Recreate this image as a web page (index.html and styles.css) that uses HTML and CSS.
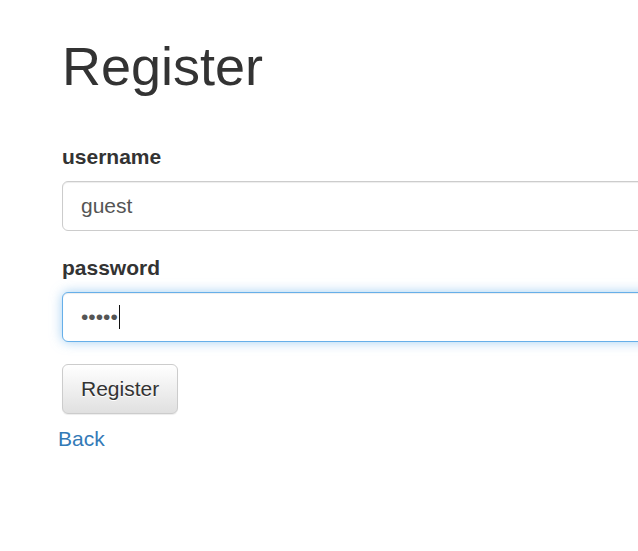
FILE: index.html
```html
<!DOCTYPE html>
<html lang="en">
<head>
<meta charset="utf-8">
<title>Register</title>
<link rel="stylesheet" href="styles.css">
</head>
<body>
<div class="container">
  <h1 class="title">Register</h1>
  <form class="form">
    <div class="form-group">
      <label class="label" for="username">username</label>
      <input class="form-control" id="username" type="text" value="guest">
    </div>
    <div class="form-group">
      <label class="label">password</label>
      <div class="form-control focused"><span class="dots">•••••</span><span class="caret"></span></div>
    </div>
    <button type="button" class="btn">Register</button>
  </form>
  <a class="back" href="#">Back</a>
</div>
</body>
</html>
```

FILE: styles.css
```css
html, body {
  margin: 0;
  padding: 0;
  overflow: hidden;
  background: #fff;
}
body {
  font-family: "Liberation Sans", Arial, Helvetica, sans-serif;
  color: #333;
}
.container {
  padding: 37px 0 0 62px;
}
.title {
  margin: 0 0 46px 0;
  font-size: 54px;
  line-height: 59px;
  font-weight: 500;
  color: #333;
}
.form {
  width: 720px;
  margin: 0;
}
.form-group {
  margin-bottom: 22px;
}
.label {
  display: block;
  font-size: 21px;
  line-height: 30px;
  font-weight: bold;
  color: #333;
  margin-bottom: 9px;
}
.form-control {
  display: flex;
  align-items: center;
  box-sizing: border-box;
  width: 100%;
  height: 50px;
  padding: 0 18px;
  font-family: inherit;
  font-size: 21px;
  line-height: 30px;
  color: #555;
  background: #fff;
  border: 1px solid #ccc;
  border-radius: 6px;
  box-shadow: inset 0 1px 1px rgba(0, 0, 0, 0.075);
  outline: none;
}
.form-control.focused {
  border-color: #66afe9;
  box-shadow: inset 0 1px 1px rgba(0, 0, 0, 0.075), 0 0 12px rgba(102, 175, 233, 0.6);
}
.dots {
  color: #555;
  letter-spacing: 0;
}
.caret {
  display: inline-block;
  width: 0;
  height: 24px;
  border-left: 1px solid #111;
  margin-left: 1px;
}
.btn {
  display: block;
  box-sizing: border-box;
  height: 50px;
  padding: 0 18px;
  font-family: inherit;
  font-size: 21px;
  color: #333;
  background: linear-gradient(to bottom, #fff 0%, #e0e0e0 100%);
  border: 1px solid #ccc;
  border-radius: 6px;
  text-shadow: 0 1px 0 #fff;
  box-shadow: inset 0 1px 0 rgba(255, 255, 255, 0.15), 0 1px 1px rgba(0, 0, 0, 0.075);
  cursor: pointer;
}
.back {
  display: inline-block;
  margin: 10px 0 0 -4px;
  font-size: 21px;
  line-height: 30px;
  color: #337ab7;
  text-decoration: none;
}
```
